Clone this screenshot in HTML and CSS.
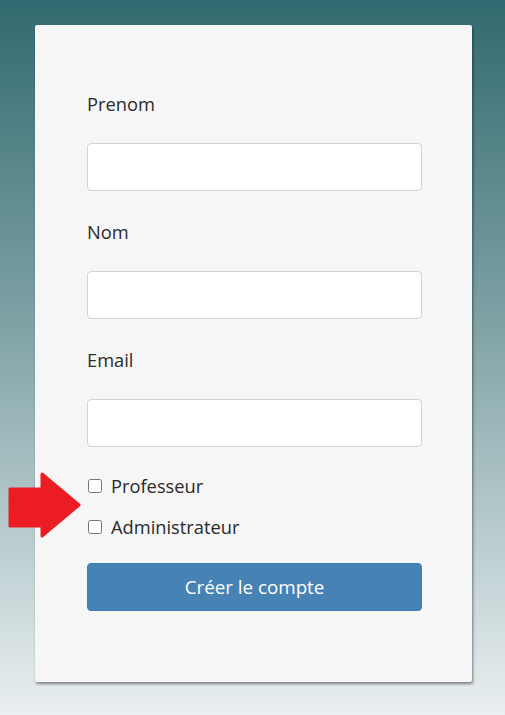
FILE: index.html
```html
<!DOCTYPE html>
<html lang="fr">
<head>
<meta charset="utf-8">
<title>Créer un compte</title>
<link rel="stylesheet" href="styles.css">
</head>
<body>
<div class="card">
  <form class="form">
    <div class="field">
      <label class="label" for="prenom">Prenom</label>
      <input class="input" id="prenom" type="text">
    </div>
    <div class="field">
      <label class="label" for="nom">Nom</label>
      <input class="input" id="nom" type="text">
    </div>
    <div class="field">
      <label class="label" for="email">Email</label>
      <input class="input" id="email" type="email">
    </div>
    <div class="checks">
      <label class="check"><input type="checkbox" class="box"><span>Professeur</span></label>
      <label class="check"><input type="checkbox" class="box"><span>Administrateur</span></label>
    </div>
    <button type="button" class="btn">Créer le compte</button>
  </form>
</div>
<svg class="arrow" width="74" height="66" viewBox="0 0 74 66">
  <polygon points="2,17 34,17 34,2 71,33 34,64 34,54 2,54" fill="#ec1c24" stroke="#ec1c24" stroke-width="3" stroke-linejoin="round"/>
</svg>
</body>
</html>
```

FILE: styles.css
```css
html, body {
  margin: 0;
  padding: 0;
}
body {
  width: 505px;
  height: 715px;
  overflow: hidden;
  background: linear-gradient(to bottom, #316a70 0%, #7fa2a5 45%, #eaeff1 100%);
  font-family: "Open Sans", "Noto Sans", sans-serif;
  color: #2a2a2a;
  position: relative;
}
.card {
  margin: 25px 0 0 35px;
  width: 437px;
  height: 657px;
  box-sizing: border-box;
  background: #f6f6f6;
  border-radius: 2px;
  box-shadow: 1px 2px 3px rgba(0, 0, 0, 0.45);
  padding: 66px 50px 0 52px;
}
.form {
  display: flex;
  flex-direction: column;
}
.field {
  display: flex;
  flex-direction: column;
  margin-bottom: 28px;
}
.label {
  font-size: 18.3px;
  line-height: 26px;
  margin-bottom: 26px;
}
.input {
  box-sizing: border-box;
  width: 335px;
  height: 48px;
  border: 1px solid #ced4da;
  border-radius: 4px;
  background: #fff;
  margin: 0;
  padding: 6px 12px;
  font: inherit;
}
.checks {
  display: flex;
  flex-direction: column;
  gap: 14px;
  margin-top: -3px;
}
.check {
  display: flex;
  align-items: center;
  gap: 9px;
  font-size: 18.3px;
  line-height: 27px;
}
.box {
  margin: 0 0 0 1px;
  width: 14px;
  height: 14px;
}
.btn {
  margin-top: 23px;
  width: 335px;
  height: 48px;
  box-sizing: border-box;
  background: #4682b4;
  border: 1px solid #3d7bc0;
  border-radius: 4px;
  color: #fff;
  font-family: inherit;
  font-size: 18.8px;
  padding: 0;
}
.arrow {
  position: absolute;
  left: 8px;
  top: 472px;
}
```
